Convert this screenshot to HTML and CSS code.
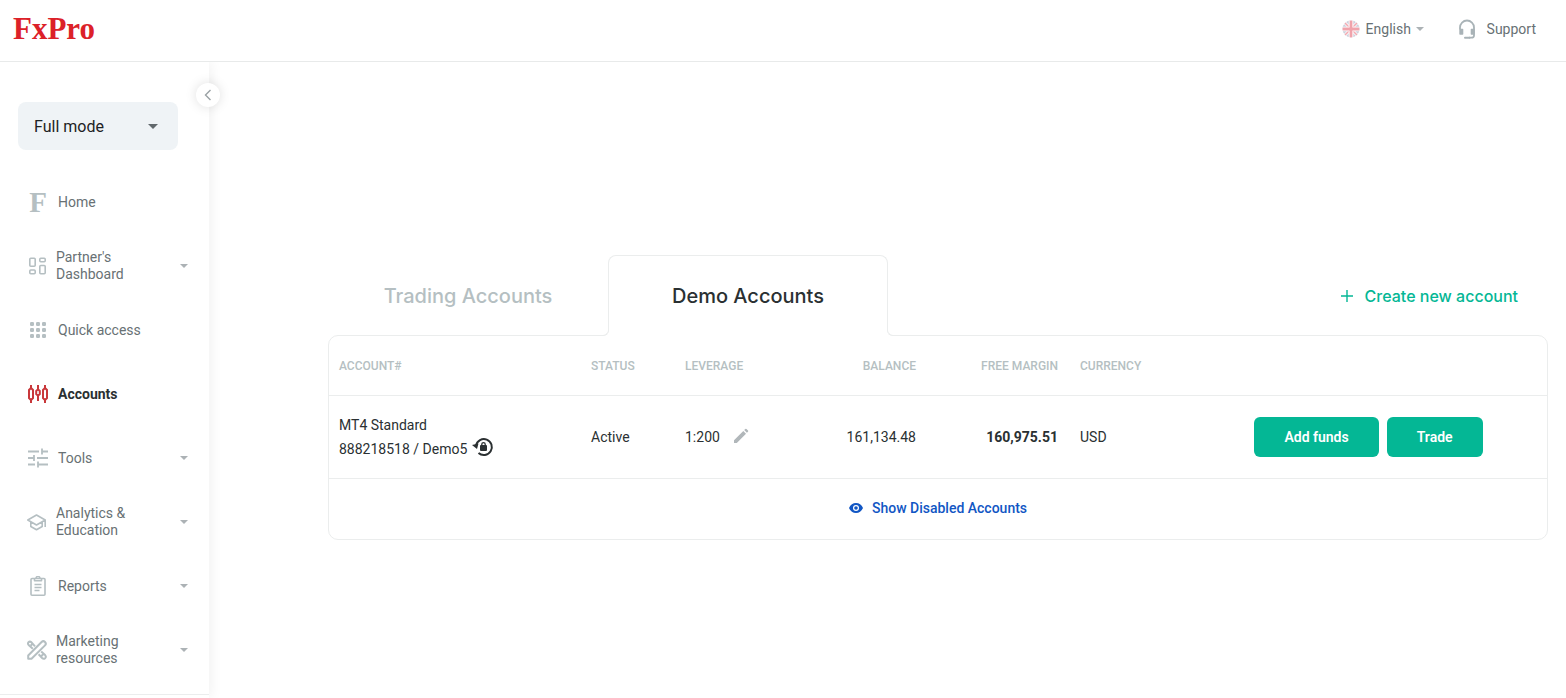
FILE: index.html
```html
<!DOCTYPE html>
<html lang="en">
<head>
<meta charset="utf-8">
<meta name="viewport" content="width=device-width, initial-scale=1">
<title>FxPro - Accounts</title>
<link rel="stylesheet" href="styles.css">
</head>
<body>
<header class="topbar">
  <a class="logo" href="#">FxPro</a>
  <div class="topbar-actions">
    <label class="language">
      <svg class="flag" viewBox="0 0 18 18" width="18" height="18" aria-hidden="true">
        <defs><clipPath id="disc"><circle cx="9" cy="9" r="8.5"/></clipPath></defs>
        <g clip-path="url(#disc)">
          <rect width="18" height="18" fill="#cdd0dc"/>
          <path d="M1 1l16 16M17 1L1 17" stroke="#fff" stroke-width="3"/>
          <path d="M1 1l16 16M17 1L1 17" stroke="#f2a9b1" stroke-width="1.6"/>
          <path d="M9 0v18M0 9h18" stroke="#fff" stroke-width="4.6"/>
          <path d="M9 0v18M0 9h18" stroke="#f0a3ab" stroke-width="2.8"/>
        </g>
      </svg>
      <select class="language-select" aria-label="Language"><option>English</option></select>
      <span class="caret" aria-hidden="true"></span>
    </label>
    <a class="support" href="#">
      <svg viewBox="0 0 18 20" width="18" height="20" fill="none" stroke="#a9b3b7" aria-hidden="true">
        <path d="M2 10.500V8.500a7 7 0 0 1 14 0V16.500Q16 18.700 13.500 18.700H11" stroke-width="1.800"/>
        <rect x="2" y="10.500" width="2.600" height="4.500" fill="#a9b3b7" stroke-width="1.400" stroke-linejoin="round"/>
        <rect x="13.400" y="10.500" width="2.600" height="4.500" fill="#a9b3b7" stroke-width="1.400" stroke-linejoin="round"/>
        <path d="M7 18.700h4.500" stroke-width="2" stroke-linecap="round"/>
      </svg>
      Support
    </a>
  </div>
</header>
<div class="layout">
  <aside class="sidebar">
    <button class="collapse" type="button" aria-label="Collapse menu">
      <svg viewBox="0 0 8 12" width="8" height="12" fill="none" stroke="#9aa1a4" stroke-width="1.400" aria-hidden="true"><path d="M6.500 1L1.500 6l5 5"/></svg>
    </button>
    <div class="mode">
      <select class="mode-select" aria-label="Interface mode"><option>Full mode</option></select>
      <span class="caret caret-dark" aria-hidden="true"></span>
    </div>
    <nav class="nav">
      <a class="nav-item" href="#"><span class="nav-icon letter" aria-hidden="true">F</span><span class="nav-label">Home</span></a>
      <a class="nav-item nav-item-tall" href="#">
        <svg class="nav-icon" viewBox="0 0 20 20" width="20" height="20" fill="none" stroke="currentColor" stroke-width="1.600" aria-hidden="true"><rect x="2.800" y="2.300" width="5.400" height="8" rx="1"/><rect x="2.800" y="14" width="5.400" height="3.800" rx="1"/><rect x="12.800" y="2.300" width="5.400" height="3.400" rx="1"/><rect x="12.800" y="9.500" width="5.400" height="8.300" rx="1"/></svg>
        <span class="nav-label">Partner's Dashboard</span><span class="caret" aria-hidden="true"></span></a>
      <a class="nav-item" href="#">
        <svg class="nav-icon" viewBox="0 0 20 20" width="20" height="20" fill="currentColor" aria-hidden="true"><rect x="2" y="2" width="4" height="4" rx="1.200"/><rect x="8" y="2" width="4" height="4" rx="1.200"/><rect x="14" y="2" width="4" height="4" rx="1.200"/><rect x="2" y="8" width="4" height="4" rx="1.200"/><rect x="8" y="8" width="4" height="4" rx="1.200"/><rect x="14" y="8" width="4" height="4" rx="1.200"/><rect x="2" y="14" width="4" height="4" rx="1.200"/><rect x="8" y="14" width="4" height="4" rx="1.200"/><rect x="14" y="14" width="4" height="4" rx="1.200"/></svg>
        <span class="nav-label">Quick access</span></a>
      <a class="nav-item active" href="#" aria-current="page">
        <svg class="nav-icon" viewBox="0 0 20 20" width="20" height="20" fill="none" stroke="#c9383b" stroke-width="2" aria-hidden="true"><path d="M3 1v3.500M3 15.500V19M10 1v4.500M10 11.500V17M17 1v3.500M17 15.500V19"/><path d="M1 6l2-2 2 2v8l-2 2-2-2zM8.200 7L10 5.300 11.800 7v3L10 11.700 8.200 10zM15 6l2-2 2 2v8l-2 2-2-2z"/></svg>
        <span class="nav-label">Accounts</span></a>
      <a class="nav-item" href="#">
        <svg class="nav-icon" viewBox="0 0 20 20" width="20" height="20" fill="none" stroke="currentColor" stroke-width="1.800" aria-hidden="true"><path d="M0 3.500h11M14 3.500h6M14 .5v6M0 10h6M6 7v6M9 10h11M0 16.500h7M10 13.500v6M10 16.500h10"/></svg>
        <span class="nav-label">Tools</span><span class="caret" aria-hidden="true"></span></a>
      <a class="nav-item nav-item-tall" href="#">
        <svg class="nav-icon" viewBox="0 0 20 20" width="20" height="20" fill="none" stroke="currentColor" stroke-width="1.600" stroke-linejoin="round" aria-hidden="true"><path d="M.8 8L9.500 3l8.700 5-8.700 5zM3.800 10v4.500l5.700 3.200 5.700-3.200V10M18.200 8v7"/></svg>
        <span class="nav-label">Analytics &amp; Education</span><span class="caret" aria-hidden="true"></span></a>
      <a class="nav-item" href="#">
        <svg class="nav-icon" viewBox="0 0 20 20" width="20" height="20" fill="none" stroke="currentColor" stroke-width="1.600" stroke-linejoin="round" aria-hidden="true"><rect x="3" y="2.500" width="14" height="16.700" rx="1"/><path d="M6.500 2.500v2.300h7V2.500M8 2.500a2 2 0 0 1 4 0M6.500 8.500h7M6.500 11.500h7M6.500 14.500h5"/></svg>
        <span class="nav-label">Reports</span><span class="caret" aria-hidden="true"></span></a>
      <a class="nav-item nav-item-tall" href="#">
        <svg class="nav-icon" viewBox="0 0 20 20" width="20" height="20" fill="none" stroke="currentColor" stroke-width="2" stroke-linejoin="round" aria-hidden="true"><path d="M1.200 15.500L14.600 2a2.300 2.300 0 0 1 3.400 3.400L4.500 18.800H1.200zM8 6.300L4.500 2.300Q2.800 .9 1.500 2.300T1.900 5.200L5.800 8.800M3.800 5.500l1.500-1.500M11.600 14.200l3.500 3.800q1.500 1.500 3 .2 1.500-1.500 0-3.100L14.200 11.600M14.200 16.200l2-2"/></svg>
        <span class="nav-label">Marketing resources</span><span class="caret" aria-hidden="true"></span></a>
    </nav>
  </aside>
  <main class="content">
    <div class="tabs">
      <div class="tablist" role="tablist">
        <button class="tab" type="button" role="tab" aria-selected="false">Trading Accounts</button>
        <button class="tab tab-active" type="button" role="tab" aria-selected="true">Demo Accounts</button>
      </div>
      <a class="create" href="#">
        <svg viewBox="0 0 12 12" width="12" height="12" fill="none" stroke="currentColor" stroke-width="1.400" aria-hidden="true"><path d="M6 0v12M0 6h12"/></svg>
        Create new account
      </a>
    </div>
    <section class="card">
      <table class="accounts">
        <colgroup><col class="col-account"><col class="col-status"><col class="col-leverage"><col class="col-balance"><col class="col-margin"><col class="col-currency"><col></colgroup>
        <thead>
          <tr><th>ACCOUNT#</th><th>STATUS</th><th>LEVERAGE</th><th class="num">BALANCE</th><th class="num">FREE MARGIN</th><th>CURRENCY</th><th></th></tr>
        </thead>
        <tbody>
          <tr>
            <td>
              <div class="account-line">MT4 Standard</div>
              <div class="account-line">888218518 / Demo5
                <button class="icon-button" type="button" aria-label="Reset password">
                  <svg viewBox="0 0 22 24" width="22" height="24" aria-hidden="true"><path d="M4 8.500A8 8 0 1 1 6.500 16" fill="none" stroke="#2b3032" stroke-width="2"/><path d="M0 8l6.500-1.500L5 12z" fill="#2b3032"/><rect x="8" y="8" width="7" height="6" rx="1" fill="#2b3032"/><path d="M9.800 8.500V7.300a1.700 1.700 0 0 1 3.400 0v1.200" fill="none" stroke="#2b3032" stroke-width="1.300"/></svg>
                </button>
              </div>
            </td>
            <td>Active</td>
            <td>
              <div class="leverage">1:200
                <button class="icon-button" type="button" aria-label="Edit leverage">
                  <svg viewBox="0 0 16 18" width="16" height="18" fill="#b1b7ba" aria-hidden="true"><path d="M1 12.200L10.300 3l2.700 2.700L3.800 15H1zM11.200 2.100l1.100-1.100q.6-.5 1.200 0L15 2.500q.5.6 0 1.200l-1.100 1.100z"/></svg>
                </button>
              </div>
            </td>
            <td class="num">161,134.48</td>
            <td class="num strong">160,975.51</td>
            <td>USD</td>
            <td>
              <div class="row-actions">
                <button class="button" type="button">Add funds</button>
                <button class="button" type="button">Trade</button>
              </div>
            </td>
          </tr>
        </tbody>
      </table>
      <div class="card-footer">
        <button class="show-disabled" type="button">
          <svg viewBox="0 0 14 10" width="14" height="10" aria-hidden="true"><path d="M0 5Q2.300 0 7 0t7 5q-2.300 5-7 5T0 5z" fill="currentColor"/><circle cx="7" cy="5" r="3" fill="#fff"/><circle cx="7" cy="5" r="1.800" fill="currentColor"/></svg>
          Show Disabled Accounts
        </button>
      </div>
    </section>
  </main>
</div>
</body>
</html>
```
FILE: styles.css
```css
:root {
  --line: #ebeded;
  --muted: #b5bfc2;
  --text: #2a3032;
  --nav: #687174;
  --green: #04b795;
}

* { box-sizing: border-box; }

body {
  margin: 0;
  height: 100vh;
  display: flex;
  flex-direction: column;
  overflow: hidden;
  background: #fff;
  color: var(--text);
  font: 14px/24px Roboto, sans-serif;
}

a { color: inherit; text-decoration: none; }

button, select { font: inherit; color: inherit; }

button {
  padding: 0;
  border: 0;
  background: none;
  cursor: pointer;
}

select {
  appearance: none;
  border: 0;
  background: none;
}

svg { display: block; flex: none; }

.caret {
  flex: none;
  border: 4px solid transparent;
  border-top-color: #acb2b5;
  border-bottom: 0;
  pointer-events: none;
}

.topbar {
  display: flex;
  flex: none;
  align-items: center;
  justify-content: space-between;
  height: 62px;
  padding: 0 30px 3px 13px;
  border-bottom: 1px solid #e8eaea;
}

.logo {
  color: #dc2129;
  font: bold 31px/40px "Liberation Serif", serif;
}

.topbar-actions {
  display: flex;
  align-items: center;
  gap: 34px;
  color: var(--nav);
}

.language {
  display: flex;
  align-items: center;
}

.language-select {
  margin-left: 6px;
  padding: 0 4px 0 0;
}

.support {
  display: flex;
  align-items: center;
  gap: 11px;
}

.layout {
  display: flex;
  flex: 1;
  min-height: 0;
}

.sidebar {
  position: relative;
  flex: none;
  align-self: stretch;
  width: 209px;
  padding-top: 40px;
  box-shadow: 2px 0 12px rgba(0, 0, 0, 0.06);
  clip-path: inset(0 -20px 0 0);
}

.collapse {
  position: absolute;
  top: 21px;
  right: -11px;
  display: grid;
  place-items: center;
  width: 24px;
  height: 24px;
  border-radius: 50%;
  background: #fff;
  box-shadow: 0 0 12px rgba(0, 0, 0, 0.13);
}

.mode {
  display: flex;
  align-items: center;
  margin: 0 31px 20px 18px;
  padding-right: 20px;
  border-radius: 8px;
  background: #eff3f6;
}

.mode-select {
  flex: 1;
  height: 48px;
  padding: 2px 0 0 16px;
  color: #1d2224;
  font-size: 16px;
}

.caret-dark {
  border-width: 5px;
  border-bottom: 0;
  border-top-color: #61686c;
}

.nav {
  padding-bottom: 12px;
  border-bottom: 1px solid var(--line);
}

.nav-item {
  display: flex;
  align-items: center;
  gap: 10px;
  height: 64px;
  padding: 0 21px 0 28px;
  color: var(--nav);
  line-height: 17px;
}

.nav-item-tall {
  gap: 9px;
  padding-left: 27px;
}

.nav-icon {
  flex: none;
  width: 20px;
  color: #b5bfc2;
}

.letter {
  font: bold 29px/29px "Liberation Serif", serif;
  text-align: center;
}

.nav-label { flex: 1; }

.nav-item-tall .nav-label { padding-right: 40px; }

.active {
  color: #2a3032;
  font-weight: 700;
}

.content {
  flex: 1;
  min-width: 0;
  padding: 193px 18px 0 119px;
}

.tabs {
  display: flex;
  align-items: stretch;
  justify-content: space-between;
  height: 81px;
  margin-bottom: -1px;
}

.tablist { display: flex; }

.tab {
  width: 280px;
  color: var(--muted);
  font: 500 20px/24px Inter, sans-serif;
}

.tab-active {
  position: relative;
  z-index: 1;
  border: 1px solid var(--line);
  border-bottom: 0;
  border-radius: 8px 8px 0 0;
  background: #fff;
  color: var(--text);
}

.tab-active::before,
.tab-active::after {
  content: "";
  position: absolute;
  bottom: 0;
  width: 7px;
  height: 7px;
  border-bottom: 1px solid var(--line);
}

.tab-active::before {
  right: 100%;
  border-right: 1px solid var(--line);
  border-bottom-right-radius: 6px;
  box-shadow: 2px 2px 0 #fff;
}

.tab-active::after {
  left: 100%;
  border-left: 1px solid var(--line);
  border-bottom-left-radius: 6px;
  box-shadow: -2px 2px 0 #fff;
}

.create {
  display: flex;
  align-items: center;
  gap: 12px;
  padding-right: 30px;
  color: var(--green);
  font: 500 16px/24px Inter, sans-serif;
}

.card {
  border: 1px solid var(--line);
  border-radius: 10px;
}

.accounts {
  width: 100%;
  table-layout: fixed;
  border-spacing: 0;
}

.col-account { width: 251px; }
.col-status { width: 94px; }
.col-leverage { width: 126px; }
.col-balance { width: 127px; }
.col-margin { width: 142px; }
.col-currency { width: 121px; }

.accounts th,
.accounts td {
  padding: 0 11px;
  border-bottom: 1px solid var(--line);
  text-align: left;
}

.accounts th:first-child,
.accounts td:first-child { padding-left: 10px; }

.accounts th {
  height: 60px;
  color: var(--muted);
  font-size: 12px;
  font-weight: 500;
}

.accounts td { height: 83px; }

.accounts .num { text-align: right; }

.accounts .strong { font-weight: 700; }

.account-line,
.leverage {
  display: flex;
  align-items: center;
  gap: 5px;
}

.leverage { gap: 13px; }

.row-actions {
  display: flex;
  justify-content: center;
  gap: 8px;
}

.button {
  height: 40px;
  padding: 0 30px;
  border-radius: 6px;
  background: var(--green);
  color: #fff;
  font-weight: 600;
}

.card-footer {
  display: flex;
  justify-content: center;
  padding: 17px 0 19px;
}

.show-disabled {
  display: flex;
  align-items: center;
  gap: 9px;
  color: #1156c4;
  font-weight: 500;
}
```
